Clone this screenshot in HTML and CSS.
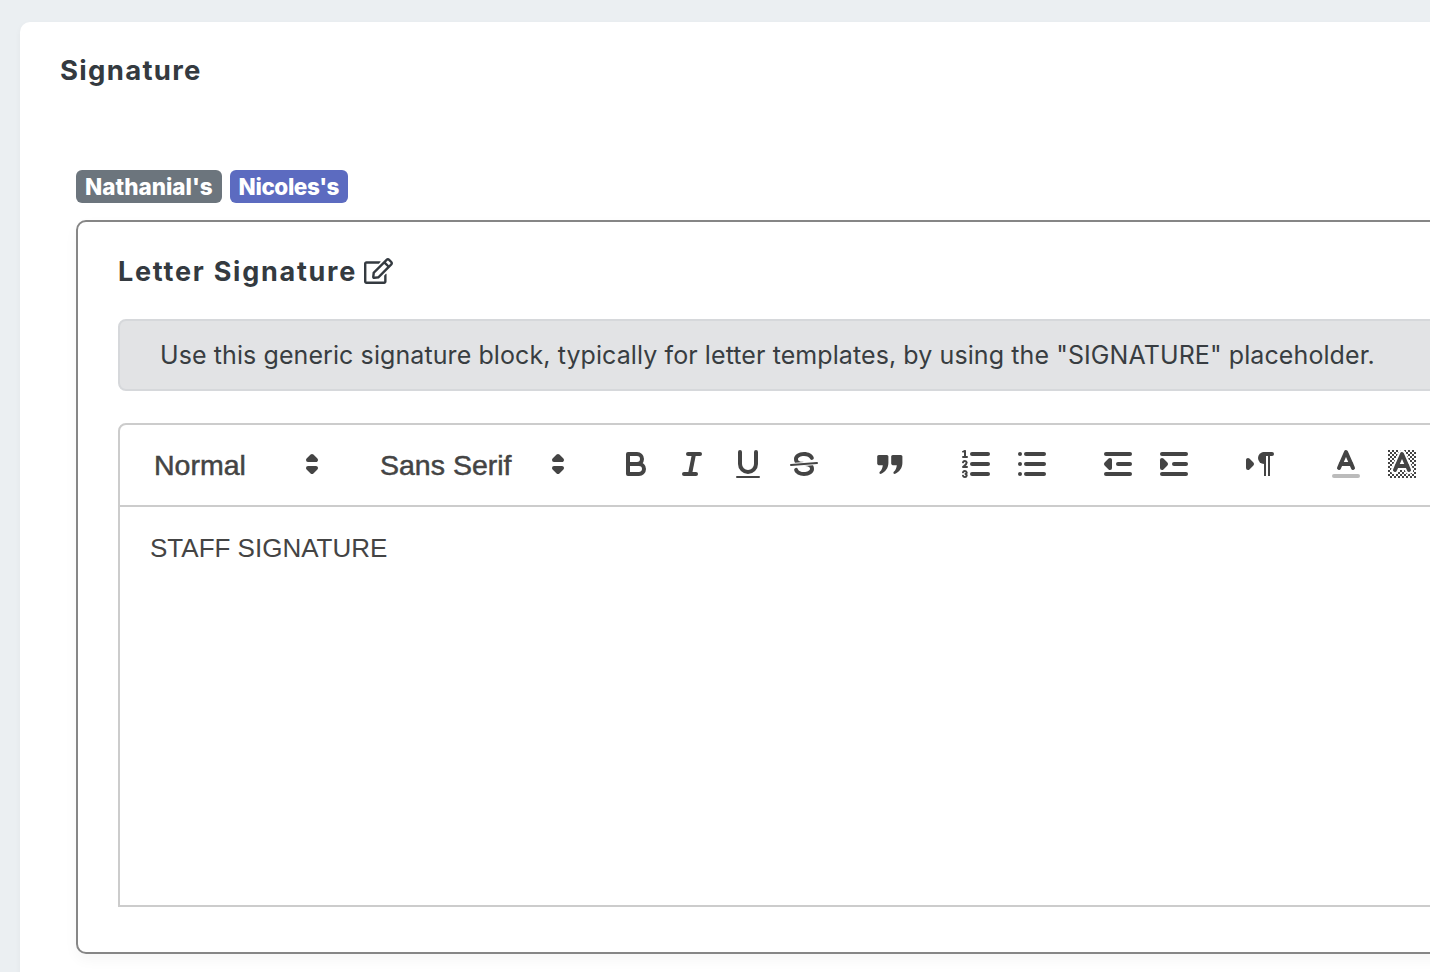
FILE: index.html
```html
<!DOCTYPE html>
<html lang="en">
<head>
<meta charset="utf-8">
<title>Signature</title>
<link rel="stylesheet" href="styles.css">
</head>
<body>
<svg class="defs" width="0" height="0" aria-hidden="true">
  <defs>
    <pattern id="checker" width="2" height="2" patternUnits="userSpaceOnUse">
      <rect x="0" y="0" width="1" height="1" class="fill"/>
      <rect x="1" y="1" width="1" height="1" class="fill"/>
    </pattern>
  </defs>
</svg>
<main class="card">
  <h1 class="card-title">Signature</h1>
  <div class="section">
    <div class="badges">
      <span class="badge badge-grey">Nathanial's</span>
      <span class="badge badge-blue">Nicoles's</span>
    </div>
    <section class="box">
      <h2 class="box-title">Letter Signature
        <svg class="edit-icon" viewBox="0 0 576 512"><path fill="currentColor" d="M402.3 344.9l32-32c5-5 13.7-1.5 13.7 5.7V464c0 26.5-21.5 48-48 48H48c-26.5 0-48-21.5-48-48V112c0-26.5 21.5-48 48-48h273.5c7.1 0 10.7 8.6 5.7 13.7l-32 32c-1.5 1.5-3.5 2.3-5.7 2.3H48v352h352V350.5c0-2.1.8-4.1 2.3-5.6zm156.6-201.8L296.3 405.7l-90.4 10c-26.2 2.9-48.5-19.2-45.6-45.6l10-90.4L432.9 17.1c22.9-22.9 59.9-22.9 82.7 0l43.2 43.2c22.9 22.9 22.9 60 .1 82.8zM460.1 174L402 115.9 216.2 301.8l-7.3 65.3 65.3-7.3L460.1 174zm64.8-79.7l-43.2-43.2c-4.1-4.1-10.8-4.1-14.8 0L436 82l58.1 58.1 30.9-30.9c4-4.2 4-10.8-.1-14.9z"/></svg>
      </h2>
      <div class="alert">Use this generic signature block, typically for letter templates, by using the "SIGNATURE" placeholder.</div>
      <div class="toolbar">
        <span class="formats">
          <span class="picker picker-header"><span class="picker-label">Normal</span><svg class="ic" viewBox="0 0 18 18"><polygon class="stroke fill" points="7 11 9 13 11 11 7 11"/><polygon class="stroke fill" points="7 7 9 5 11 7 7 7"/></svg></span>
        </span>
        <span class="formats">
          <span class="picker picker-font"><span class="picker-label">Sans Serif</span><svg class="ic" viewBox="0 0 18 18"><polygon class="stroke fill" points="7 11 9 13 11 11 7 11"/><polygon class="stroke fill" points="7 7 9 5 11 7 7 7"/></svg></span>
        </span>
        <span class="formats">
          <span class="btn"><svg class="ic" viewBox="0 0 18 18"><path class="stroke" d="M5,4H9.5A2.5,2.5,0,0,1,12,6.5v0A2.5,2.5,0,0,1,9.5,9H5A0,0,0,0,1,5,9V4A0,0,0,0,1,5,4Z"/><path class="stroke" d="M5,9h5.5A2.5,2.5,0,0,1,13,11.5v0A2.5,2.5,0,0,1,10.5,14H5a0,0,0,0,1,0,0V9A0,0,0,0,1,5,9Z"/></svg></span>
          <span class="btn"><svg class="ic" viewBox="0 0 18 18"><line class="stroke" x1="7" x2="13" y1="4" y2="4"/><line class="stroke" x1="5" x2="11" y1="14" y2="14"/><line class="stroke" x1="8" x2="10" y1="14" y2="4"/></svg></span>
          <span class="btn"><svg class="ic" viewBox="0 0 18 18"><path class="stroke" d="M5,3V9a4.012,4.012,0,0,0,4,4H9a4.012,4.012,0,0,0,4-4V3"/><rect class="fill" height="1" rx="0.5" ry="0.5" width="12" x="3" y="15"/></svg></span>
          <span class="btn"><svg class="ic" viewBox="0 0 18 18"><line class="stroke thin" x1="15.5" x2="2.5" y1="8.5" y2="9.5"/><path class="fill" d="M9.007,8C6.542,7.791,6,7.519,6,6.5,6,5.792,7.283,5,9,5c1.571,0,2.765.679,2.969,1.309a1,1,0,0,0,1.9-.617C13.356,4.106,11.354,3,9,3,6.2,3,4,4.538,4,6.5a3.2,3.2,0,0,0,.5,1.843Z"/><path class="fill" d="M8.984,10C11.457,10.208,12,10.479,12,11.5c0,.708-1.283,1.5-3,1.5-1.571,0-2.765-.679-2.969-1.309a1,1,0,1,0-1.9.617C4.644,13.894,6.646,15,9,15c2.8,0,5-1.538,5-3.5a3.2,3.2,0,0,0-.5-1.843Z"/></svg></span>
        </span>
        <span class="formats">
          <span class="btn"><svg class="ic" viewBox="0 0 18 18"><path class="fill" d="M3.4,4.5H7.4C7.9,4.5,8.2,4.9,8.2,5.3V8.5C8.2,11,6.6,13,4.6,13.9C3.9,14.2,3.4,13.4,3.9,12.9C4.9,12,5.3,10.9,5.4,9.6H3.4C2.9,9.6,2.6,9.2,2.6,8.8V5.3C2.6,4.9,2.9,4.5,3.4,4.5Z"/><path class="fill" d="M10.4,4.5H14.4C14.9,4.5,15.2,4.9,15.2,5.3V8.5C15.2,11,13.6,13,11.6,13.9C10.9,14.2,10.4,13.4,10.9,12.9C11.9,12,12.3,10.9,12.4,9.6H10.4C9.9,9.6,9.6,9.2,9.6,8.8V5.3C9.6,4.9,9.9,4.5,10.4,4.5Z"/></svg></span>
        </span>
        <span class="formats">
          <span class="btn"><svg class="ic" viewBox="0 0 18 18"><line class="stroke" x1="7" x2="15" y1="4" y2="4"/><line class="stroke" x1="7" x2="15" y1="9" y2="9"/><line class="stroke" x1="7" x2="15" y1="14" y2="14"/><line class="stroke thin" x1="2.5" x2="4.5" y1="5.5" y2="5.5"/><path class="fill" d="M3.5,6A0.5,0.5,0,0,1,3,5.5V3.085l-0.276.138A0.5,0.5,0,0,1,2.053,3c-0.124-.247-0.023-0.324.224-0.447l1-.5A0.5,0.5,0,0,1,4,2.5v3A0.5,0.5,0,0,1,3.5,6Z"/><path class="stroke thin" d="M4.5,10.5h-2c0-.234,1.85-1.076,1.85-2.234A0.959,0.959,0,0,0,2.5,8.156"/><path class="stroke thin" d="M2.5,14.846a0.959,0.959,0,0,0,1.85-.109A0.7,0.7,0,0,0,3.75,14a0.688,0.688,0,0,0,.6-0.736,0.959,0.959,0,0,0-1.85-.109"/></svg></span>
          <span class="btn"><svg class="ic" viewBox="0 0 18 18"><line class="stroke" x1="6" x2="15" y1="4" y2="4"/><line class="stroke" x1="6" x2="15" y1="9" y2="9"/><line class="stroke" x1="6" x2="15" y1="14" y2="14"/><line class="stroke" x1="3" x2="3" y1="4" y2="4"/><line class="stroke" x1="3" x2="3" y1="9" y2="9"/><line class="stroke" x1="3" x2="3" y1="14" y2="14"/></svg></span>
        </span>
        <span class="formats">
          <span class="btn"><svg class="ic" viewBox="0 0 18 18"><line class="stroke" x1="3" x2="15" y1="14" y2="14"/><line class="stroke" x1="3" x2="15" y1="4" y2="4"/><line class="stroke" x1="9" x2="15" y1="9" y2="9"/><polyline class="fill stroke" points="5 7 5 11 3 9 5 7"/></svg></span>
          <span class="btn"><svg class="ic" viewBox="0 0 18 18"><line class="stroke" x1="3" x2="15" y1="14" y2="14"/><line class="stroke" x1="3" x2="15" y1="4" y2="4"/><line class="stroke" x1="9" x2="15" y1="9" y2="9"/><polyline class="fill stroke" points="3 7 3 11 5 9 3 7"/></svg></span>
        </span>
        <span class="formats">
          <span class="btn"><svg class="ic" viewBox="0 0 18 18"><polygon class="stroke fill" points="3 11 5 9 3 7 3 11"/><line class="stroke" x1="15" x2="11" y1="4" y2="4"/><path class="fill" d="M11,3a3,3,0,0,0,0,6h1V3H11Z"/><rect class="fill" height="11" width="1" x="11" y="4"/><rect class="fill" height="11" width="1" x="13" y="4"/></svg></span>
        </span>
        <span class="formats">
          <span class="btn"><svg class="ic" viewBox="0 0 18 18"><line class="stroke color-label" x1="3" x2="15" y1="15" y2="15"/><polyline class="stroke" points="5.5 11 9 3 12.5 11"/><line class="stroke" x1="11.63" x2="6.38" y1="9" y2="9"/></svg></span>
          <span class="btn"><svg class="ic" viewBox="0 0 18 18"><rect class="checker" x="2" y="2" width="14" height="14"/><polyline class="halo" points="5.5 12 9 4 12.5 12"/><polyline class="stroke" points="5.5 12 9 4 12.5 12"/><line class="stroke" x1="11.63" x2="6.38" y1="10" y2="10"/></svg></span>
        </span>
      </div>
      <div class="editor"><p>STAFF SIGNATURE</p></div>
    </section>
  </div>
</main>
</body>
</html>
```

FILE: styles.css
```css
html, body {
  margin: 0;
  height: 972px;
  overflow: hidden;
}

body {
  background: #ebeff2;
  padding: 22px 0 0 20px;
  box-sizing: border-box;
  font-family: "Inter", "Liberation Sans", sans-serif;
  color: #343a40;
}

.defs {
  position: absolute;
}

.card {
  width: 1560px;
  box-sizing: border-box;
  background: #fff;
  border-radius: 10px;
  padding: 30px 40px 0;
  height: 1000px;
  box-shadow: 0 2px 6px rgba(0, 0, 0, .04);
}

.card-title {
  margin: 0;
  font-size: 27.5px;
  line-height: 36px;
  font-weight: 700;
  letter-spacing: 1.3px;
  color: #343a40;
}

.section {
  margin: 82px 0 0 16px;
}

.badges {
  display: flex;
  gap: 8px;
  height: 33px;
}

.badge {
  display: flex;
  align-items: center;
  padding: 0 9px 1px;
  border-radius: 6px;
  color: #fff;
  font-size: 22.5px;
  font-weight: 800;
}

.badge-grey {
  background: #6c757d;
  letter-spacing: 0;
}

.badge-blue {
  background: #5c6bc0;
  letter-spacing: -.4px;
}

.box {
  margin-top: 17px;
  height: 734px;
  box-sizing: border-box;
  border: 2px solid #868686;
  border-radius: 10px;
  padding: 30px 40px 0;
  box-shadow: 0 6px 14px rgba(0, 0, 0, .04);
}

.box-title {
  margin: 0;
  display: flex;
  align-items: center;
  gap: 7px;
  height: 38px;
  font-size: 27px;
  font-weight: 700;
  letter-spacing: 1.75px;
  color: #343a40;
}

.edit-icon {
  width: 29px;
  height: 26px;
}

.alert {
  margin-top: 29px;
  height: 72px;
  box-sizing: border-box;
  display: flex;
  align-items: center;
  padding: 0 40px 1px;
  background: #e2e3e5;
  border: 2px solid #d6d8db;
  border-radius: 8px;
  color: #383d41;
  font-size: 25px;
  letter-spacing: .09px;
  font-weight: 400;
}

.toolbar {
  margin-top: 32px;
  height: 84px;
  box-sizing: border-box;
  display: flex;
  align-items: center;
  gap: 30px;
  padding: 0 16px 2px;
  border: 2px solid #ccc;
  border-radius: 8px 8px 0 0;
  color: #444;
  font-family: "Liberation Sans", Arial, sans-serif;
  font-size: 28.5px;
  font-weight: 400;
}

.formats {
  display: flex;
}

.picker {
  height: 48px;
  box-sizing: border-box;
  display: flex;
  align-items: center;
  justify-content: space-between;
  padding: 0 2px 0 18px;
}

.picker-label {
  padding-top: 3px;
  -webkit-text-stroke: .5px #444;
}

.picker-header { width: 196px; }
.picker-font { width: 216px; }

.btn {
  width: 56px;
  height: 48px;
  display: flex;
  align-items: center;
  justify-content: center;
}

.ic {
  width: 36px;
  height: 36px;
  display: block;
}

.stroke {
  fill: none;
  stroke: #444;
  stroke-width: 2;
  stroke-linecap: round;
  stroke-linejoin: round;
}

.fill { fill: #444; }

.stroke.thin { stroke-width: 1; }

.stroke.color-label { stroke: #bbb; }

.checker { fill: url(#checker); }

.halo {
  fill: #fff;
  stroke: #fff;
  stroke-width: 4;
  stroke-linejoin: round;
  stroke-linecap: round;
}

.editor {
  height: 400px;
  box-sizing: border-box;
  border: 2px solid #ccc;
  border-top: 0;
  padding: 23px 30px;
  font-family: "Liberation Sans", Arial, sans-serif;
  font-size: 26px;
  line-height: 37px;
  color: #444;
}

.editor p {
  margin: 0;
}
```
